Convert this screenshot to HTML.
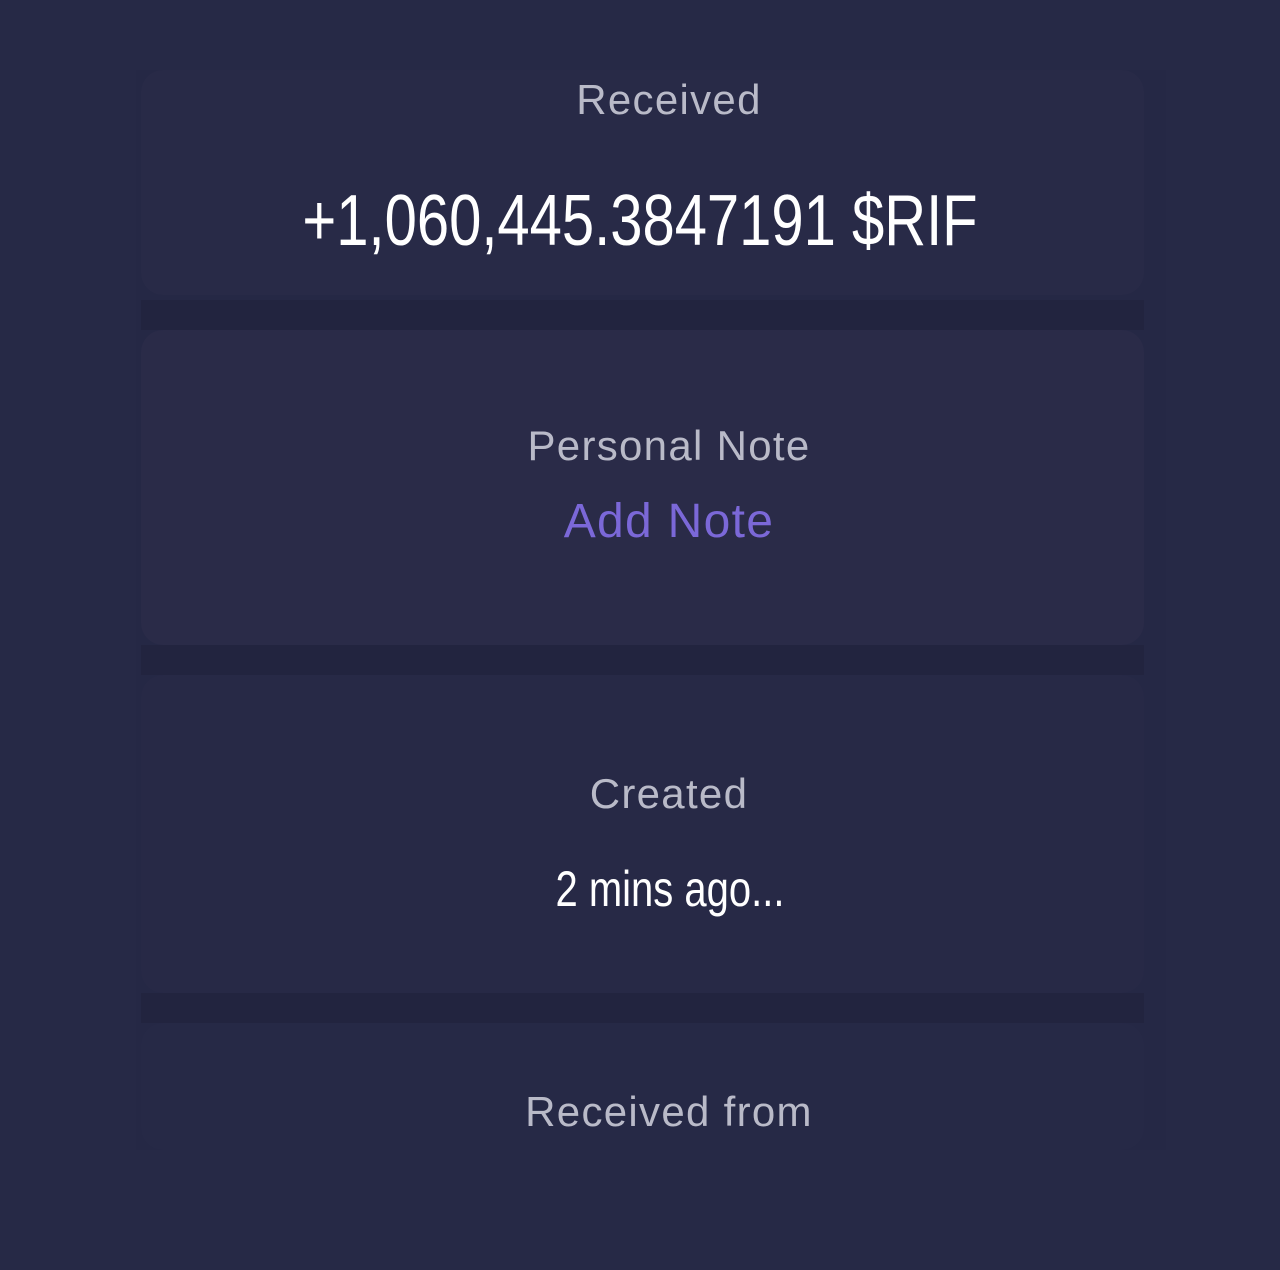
<!DOCTYPE html>
<html><head><style>
html,body{margin:0;padding:0;width:1280px;height:1270px;background:#262946;overflow:hidden;font-family:"Liberation Sans",sans-serif}
.wrap{position:absolute;left:136px;top:70px;width:1030px;height:1080px;background:#252845}
.card{position:absolute;left:141px;width:1003px;background:#2a2b48;border-radius:22px}
.gap{position:absolute;left:141px;width:1003px;background:#22243f}
.lbl{position:absolute;left:58px;width:1222px;text-align:center;color:#b9bac8;font-size:42px;letter-spacing:1.3px}
.big{position:absolute;white-space:nowrap;color:#fff;transform-origin:center;}
</style></head><body>
<div class="wrap"></div>
<div class="card" style="top:70px;height:225px;background:#282a47"></div>
<div class="gap" style="top:300px;height:30px"></div>
<div class="card" style="top:330px;height:315px"></div>
<div class="gap" style="top:645px;height:30px"></div>
<div class="card" style="top:675px;height:318px;background:#272946"></div>
<div class="gap" style="top:993px;height:30px"></div>
<div class="card" style="top:1023px;height:127px;background:#262946"></div>
<div class="lbl" style="top:76px">Received</div>
<div class="big" style="left:640px;top:180px;font-size:72px;transform:translateX(-50%) scaleX(0.805)">+1,060,445.3847191 $RIF</div>
<div class="lbl" style="top:422px">Personal Note</div>
<div class="lbl" style="top:494px;color:#7b68d8;font-size:48px">Add Note</div>
<div class="lbl" style="top:770px">Created</div>
<div class="big" style="left:670px;top:860px;font-size:50px;transform:translateX(-50%) scaleX(0.8)">2 mins ago...</div>
<div class="lbl" style="top:1088px">Received from</div>
</body></html>
